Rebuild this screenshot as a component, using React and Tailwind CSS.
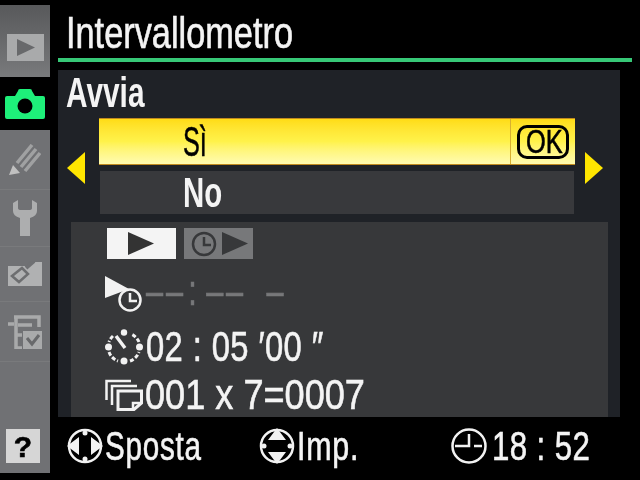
const FONT = "font-['Liberation_Sans',sans-serif]"

// the camera font is much narrower than anything installed, so squeeze it
function Narrow({ w, scale, className = '', children }) {
  return (
    <span className={`${w} shrink-0 block whitespace-pre ${className}`}>
      <span className={`inline-block origin-left ${scale}`}>{children}</span>
    </span>
  )
}

function PlayIcon() {
  return (
    <svg width="37" height="27" viewBox="0 0 37 27">
      <rect width="37" height="27" fill="#a9aaab" />
      <path d="M10 5 L28 13.500 L10 22 Z" fill="#68696b" />
    </svg>
  )
}

function CameraIcon() {
  return (
    <svg width="42" height="32" viewBox="0 0 42 32">
      <path d="M3 8 H11 L14 3 Q14 1 16 1 H26 Q28 1 28 3 L31 8 H39 Q41 8 41 10 V29 Q41 31 39 31 H3 Q1 31 1 29 V10 Q1 8 3 8 Z" fill="#1ef07a" />
      <circle cx="21" cy="18" r="7.500" fill="#000" />
    </svg>
  )
}

function PencilIcon() {
  return (
    <svg width="32" height="32" viewBox="0 0 32 32" fill="none">
      <path d="M8 19 L23 1 M12 23 L27 5 M16 27 L31 9" stroke="#a0a1a2" strokeWidth="3.500" />
      <path d="M0 31 L4 21 L11 29 Z" fill="#c0c0c0" />
    </svg>
  )
}

function WrenchIcon() {
  return (
    <svg width="24" height="36" viewBox="0 0 24 36">
      <path d="M0 3 L5 0 V8 Q5 10 8 10 H16 Q19 10 19 8 V0 L24 3 V11 Q24 16 17 18 V36 H7 V18 Q0 16 0 11 Z" fill="#adaeaf" />
    </svg>
  )
}

function RetouchIcon() {
  return (
    <svg width="36" height="26" viewBox="0 0 36 26">
      <path d="M1 5 H23 L28 1 L35 1 V25 H1 Z" fill="#b0b1b2" />
      <path d="M5 15 L15 7 L21 13 L12 21 Z" fill="none" stroke="#6d6e70" strokeWidth="2.500" />
      <path d="M19 7 L27 0" stroke="#6f7073" strokeWidth="4" />
    </svg>
  )
}

function RecentIcon() {
  return (
    <svg width="34" height="34" viewBox="0 0 34 34" fill="none">
      <path d="M0 9 H6 M6 2 H31 V12 M10 10 H24 M8 2 V33 H14 M8 20 H14" stroke="#a9aaab" strokeWidth="3.500" />
      <rect x="15" y="16" width="19" height="18" fill="#a9aaab" />
      <path d="M19 23 L24 29 L31 20" stroke="#68696b" strokeWidth="3" />
    </svg>
  )
}

function Triangle({ left }) {
  return (
    <svg width="18" height="32" viewBox="0 0 18 32">
      <path d={left ? 'M18 0 V32 L0 16 Z' : 'M0 0 V32 L18 16 Z'} fill="#ffe600" />
    </svg>
  )
}

function PlayButton({ bg, fill, timer }) {
  return (
    <svg width="69" height="31" viewBox="0 0 69 31">
      <rect width="69" height="31" fill={bg} />
      {timer ? (
        <>
          <circle cx="20" cy="16" r="11" fill="none" stroke={fill} strokeWidth="2.500" />
          <path d="M20 9 V17 H27" fill="none" stroke={fill} strokeWidth="2.500" />
          <path d="M38 4 L64 15.500 L38 27 Z" fill={fill} />
        </>
      ) : (
        <path d="M21 4 L47 15.500 L21 27 Z" fill={fill} />
      )}
    </svg>
  )
}

function DelayIcon() {
  return (
    <svg width="38" height="36" viewBox="0 0 38 36" fill="none">
      <path d="M0 0 L24 13 L0 22 Z" fill="#f2f2f2" />
      <circle cx="25" cy="24" r="10.500" fill="#37383a" stroke="#f2f2f2" strokeWidth="2.500" />
      <path d="M25 17 V25 H32" stroke="#f2f2f2" strokeWidth="2.500" />
    </svg>
  )
}

function IntervalIcon() {
  return (
    <svg width="38" height="36" viewBox="0 0 38 36" fill="none">
      <path d="M8 7 A15 15 0 0 0 4 13 M4 23 A15 15 0 0 0 13 32 M25 32 A15 15 0 0 0 34 23 M34 13 A15 15 0 0 0 26 5" stroke="#f2f2f2" strokeWidth="3" strokeDasharray="4 2" />
      <path d="M11 7 L20 19" stroke="#f2f2f2" strokeWidth="3.500" />
      <circle cx="19" cy="3.500" r="3.200" fill="#f2f2f2" />
      <circle cx="19" cy="32" r="3.500" fill="#f2f2f2" />
      <circle cx="3.500" cy="18" r="3.500" fill="#f2f2f2" />
      <circle cx="34.500" cy="18" r="3.500" fill="#f2f2f2" />
    </svg>
  )
}

function FramesIcon() {
  return (
    <svg width="38" height="32" viewBox="0 0 38 32" fill="none" stroke="#f2f2f2" strokeWidth="2.500">
      <path d="M1.500 21 V2 H26" />
      <path d="M7 26 V7 H32" />
      <path d="M13 30.500 H29 L36.500 24 V12 H13 Z" strokeWidth="3" />
      <path d="M28 31 V24 H36" />
    </svg>
  )
}

function MoveIcon() {
  return (
    <svg width="36" height="36" viewBox="0 0 36 36">
      <circle cx="18" cy="18" r="16" fill="none" stroke="#f2f2f2" strokeWidth="2.500" />
      <path d="M0 18 L12 9 V27 Z M36 18 L24 9 V27 Z" fill="#f2f2f2" />
      <circle cx="18" cy="5" r="2.500" fill="#f2f2f2" />
      <circle cx="18" cy="31" r="2.500" fill="#f2f2f2" />
    </svg>
  )
}

function SetIcon() {
  return (
    <svg width="36" height="36" viewBox="0 0 36 36">
      <circle cx="18" cy="18" r="16" fill="none" stroke="#f2f2f2" strokeWidth="2.500" />
      <path d="M18 0 L27 12 H9 Z M18 36 L27 24 H9 Z" fill="#f2f2f2" />
      <circle cx="5" cy="18" r="2.500" fill="#f2f2f2" />
      <circle cx="31" cy="18" r="2.500" fill="#f2f2f2" />
    </svg>
  )
}

function ClockIcon() {
  return (
    <svg width="38" height="36" viewBox="0 0 38 36" fill="none" stroke="#f2f2f2" strokeWidth="2.500">
      <circle cx="19" cy="18" r="16.500" />
      <path d="M19 6 V18 H5 M24 18 H32" />
    </svg>
  )
}

function Tab({ h, children, active }) {
  return (
    <div className={`flex items-center justify-center ${h} ${active ? 'bg-black' : 'bg-[#707174] border-b border-[#797a7c]'}`}>
      {children}
    </div>
  )
}

export default function App() {
  return (
    <div className={`flex w-[640px] h-[480px] overflow-hidden bg-black text-[#f4f4f4] blur-[0.5px] [-webkit-text-stroke:0.6px] ${FONT}`}>
      {/* Menu tabs */}
      <aside className="w-[50px] shrink-0 flex flex-col pt-[5px]">
        <div className="h-[72px] pt-[29px] flex justify-center bg-gradient-to-b from-[#58595b] to-[#797a7c]">
          <span className="h-[27px]"><PlayIcon /></span>
        </div>
        <Tab h="h-[53px]" active><CameraIcon /></Tab>
        <Tab h="h-[60px]"><PencilIcon /></Tab>
        <Tab h="h-[57px]"><WrenchIcon /></Tab>
        <Tab h="h-[55px]"><RetouchIcon /></Tab>
        <Tab h="h-[60px]"><RecentIcon /></Tab>
        <div className="flex-1 mb-[7px] flex flex-col justify-end pl-[6px] pb-[10px] bg-[#707174]">
          <span className="w-[34px] h-[34px] flex items-center justify-center bg-[#d6d6d6] text-black text-[30px] font-bold">?</span>
        </div>
      </aside>

      <main className="w-[590px] ml-[8px] flex flex-col">
        <h1 className="h-[58px] pl-[8px] pt-[8px] text-[44px] leading-[50px] font-normal">
          <Narrow w="w-[227px]" scale="scale-x-[0.78]">Intervallometro</Narrow>
        </h1>
        <div className="h-[4px] w-[574px] bg-[#37c877]" />

        {/* Panel */}
        <section className="mt-[8px] w-[562px] h-[347px] bg-[#1f2227] flex flex-col">
          <p className="h-[48px] pl-[8px] text-[42px] leading-[46px] font-bold [-webkit-text-stroke:0]">
            <Narrow w="w-[78px]" scale="scale-x-[0.71]">Avvia</Narrow>
          </p>

          <div className="flex items-center">
            <div className="w-[41px] pl-[9px] pt-[4px] flex"><Triangle left /></div>
            <div className="w-[476px] flex flex-col gap-[6px]">
              <div className="h-[47px] flex bg-gradient-to-b from-[#ffdc14] via-[#fff24a] to-[#fffbb0] border-y border-[#c08a1e] text-black">
                <div className="w-[411px] pl-[84px] text-[42px] leading-[46px]">
                  <Narrow w="w-[23px]" scale="scale-x-[0.6]">Sì</Narrow>
                </div>
                <div className="flex-1 flex items-center justify-center border-l border-[#d8b030]">
                  <div className="w-[52px] h-[34px] pl-[6px] rounded-[10px] border-[3px] border-black text-[33px] leading-[28px]">
                    <Narrow w="w-[37px]" scale="scale-x-[0.77]">OK</Narrow>
                  </div>
                </div>
              </div>
              <div className="h-[43px] mx-[1px] pl-[83px] bg-[#38393c] text-[42px] leading-[44px] font-bold [-webkit-text-stroke:0]">
                <Narrow w="w-[39px]" scale="scale-x-[0.7]">No</Narrow>
              </div>
            </div>
            <div className="pl-[10px] pt-[4px] flex"><Triangle /></div>
          </div>

          {/* Info */}
          <div className="mt-[8px] ml-[13px] w-[537px] flex-1 min-h-0 bg-[#37383a] pl-[36px] pt-[6px]">
            <div className="flex gap-[8px]">
              <PlayButton bg="#f4f4f4" fill="#333" />
              <PlayButton bg="#77787a" fill="#37383a" timer />
            </div>
            <div className="mt-[17px] h-[38px] flex -ml-[2px]">
              <DelayIcon />
              <Narrow w="w-[140px]" scale="scale-x-[0.73]" className="ml-[3px] text-[#77787a] text-[42px] leading-[30px] tracking-[4px]">
                ––<span className="ml-[3px]">:</span><span className="ml-[9px]">––</span><span className="ml-[28px]">–</span>
              </Narrow>
            </div>
            <div className="mt-[12px] h-[42px] flex items-center -ml-[2px]">
              <IntervalIcon />
              <Narrow w="w-[177px]" scale="scale-x-[0.78]" className="ml-[3px] text-[42px] leading-[42px] tracking-[0.5px]">02 : 05 ′00 ″</Narrow>
            </div>
            <div className="mt-[9px] h-[36px] flex items-center -ml-[2px]">
              <FramesIcon />
              <Narrow w="w-[219px]" scale="scale-x-[0.86]" className="ml-[2px] text-[42px] leading-[36px]">001 x 7=0007</Narrow>
            </div>
          </div>
        </section>

        {/* Footer */}
        <footer className="flex-1 flex items-center pb-[5px] text-[40px] leading-none">
          <span className="ml-[9px]"><MoveIcon /></span>
          <Narrow w="w-[95px]" scale="scale-x-[0.74]" className="ml-[2px] tracking-[1px]">Sposta</Narrow>
          <span className="ml-[59px]"><SetIcon /></span>
          <Narrow w="w-[61px]" scale="scale-x-[0.76]" className="ml-[2px] tracking-[1px]">Imp.</Narrow>
          <span className="ml-[92px]"><ClockIcon /></span>
          <Narrow w="w-[98px]" scale="scale-x-[0.78]" className="ml-[4px] tracking-[0.5px]">18 : 52</Narrow>
        </footer>
      </main>
    </div>
  )
}
